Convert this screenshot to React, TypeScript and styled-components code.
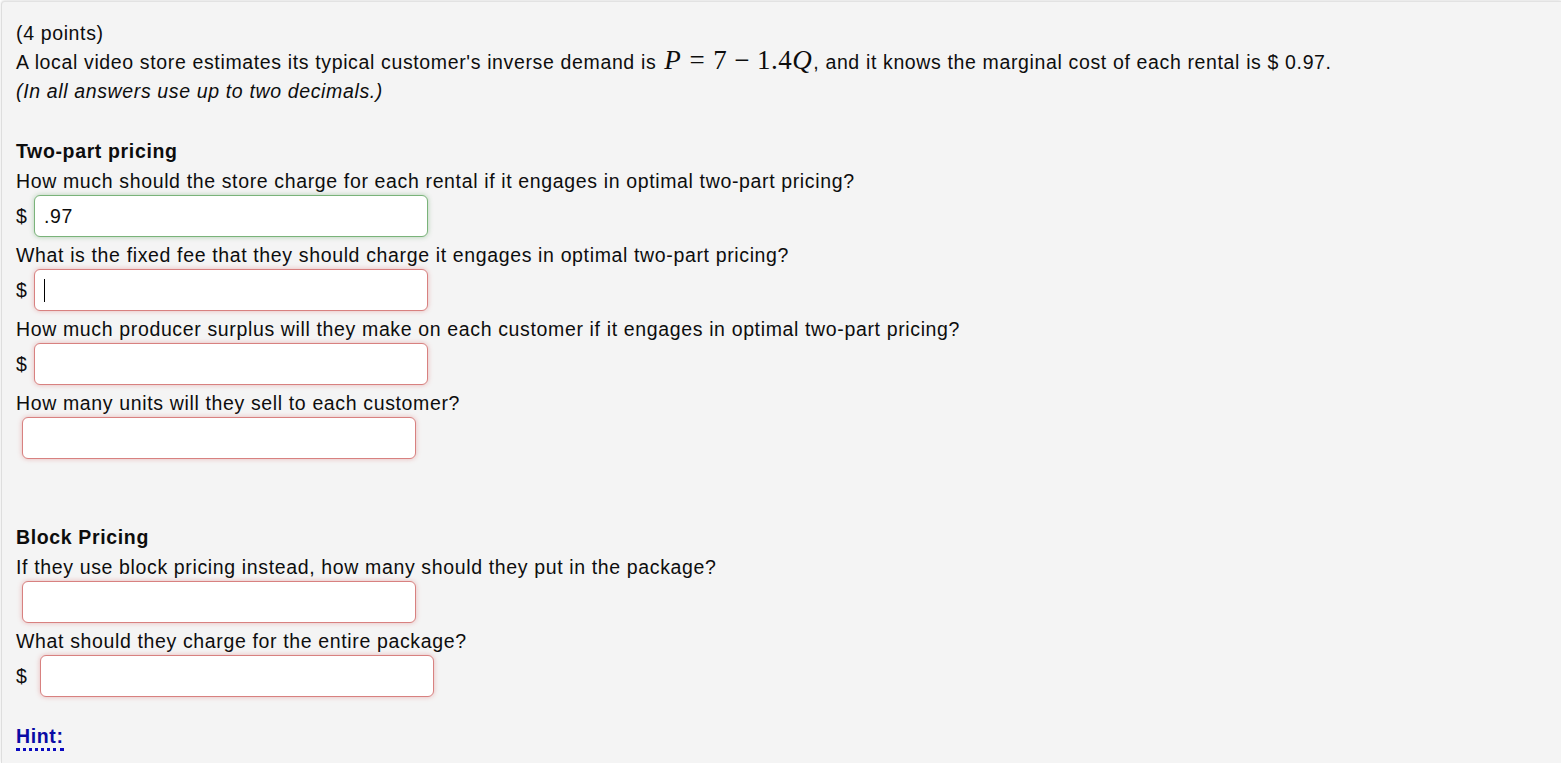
import React from "react";
import styled, { createGlobalStyle } from "styled-components";

const Global = createGlobalStyle`
  html, body { margin: 0; padding: 0; background: #ffffff; }
  body { font-family: "Liberation Sans", Arial, sans-serif; color: #0d0d0d; }
`;

const Panel = styled.div`
  margin: 1px 0 0 1px;
  min-height: 762px;
  box-sizing: border-box;
  background: #f4f4f4;
  border-left: 1px solid #dedede;
  border-top: 1px solid #e2e2e2;
  border-top-left-radius: 4px;
  box-shadow: 0 -1px 3px rgba(0, 0, 0, 0.12);
  padding: 17px 15px 0 14px;
  font-size: 19.5px;
  letter-spacing: 0.64px;
  line-height: 28px;
`;

const Line = styled.div<{ $mb?: number }>`
  height: 28px;
  line-height: 28px;
  margin-bottom: ${(p) => p.$mb ?? 0}px;
  white-space: nowrap;
`;

const Italic = styled(Line)`
  font-style: italic;
`;

const Heading = styled(Line)`
  font-weight: bold;
  margin-bottom: 2px;
`;

const Math = styled.span`
  font-family: "Liberation Serif", "DejaVu Serif", serif;
  font-size: 27px;
  line-height: 1;
  letter-spacing: 0.5px;
  margin: 0 1px 0 2px;
`;

const MathVar = styled.i`
  font-style: italic;
`;

const Op = styled.span<{ $w: number }>`
  margin: 0 ${(p) => p.$w}em;
`;

const Spacer = styled.div<{ $h: number }>`
  height: ${(p) => p.$h}px;
`;

const InputRow = styled.div`
  display: flex;
  align-items: flex-start;
  height: 46px;
`;

const Dollar = styled.span`
  width: 10px;
  line-height: 42px;
  letter-spacing: 0;
`;

const Field = styled.div<{ $ok?: boolean; $ml: number }>`
  position: relative;
  box-sizing: border-box;
  width: 394px;
  height: 42px;
  margin-left: ${(p) => p.$ml}px;
  background: #ffffff;
  border: 1px solid ${(p) => (p.$ok ? "#7ab37a" : "#d88180")};
  border-radius: 6px;
  box-shadow: 0 0 5px ${(p) => (p.$ok ? "rgba(90, 160, 90, 0.45)" : "rgba(215, 90, 90, 0.4)")};
  display: flex;
  align-items: center;
  padding-left: 9px;
`;

const Caret = styled.span`
  position: absolute;
  left: 9px;
  top: 9px;
  width: 1px;
  height: 23px;
  background: #000;
`;

const Hint = styled.span`
  display: inline-block;
  color: #0a0aa5;
  font-weight: bold;
  line-height: 24px;
  border-bottom: 3px dotted #0a0ac0;
`;

const Input = ({ ok, ml, value, caret }: { ok?: boolean; ml: number; value?: string; caret?: boolean }) => (
  <Field $ok={ok} $ml={ml}>
    {value}
    {caret && <Caret />}
  </Field>
);

export default function App() {
  return (
    <>
      <Global />
      <Panel>
        <Line>(4 points)</Line>
        <Line $mb={2}>
          A local video store estimates its typical customer's inverse demand is{" "}
          <Math>
            <MathVar>P</MathVar>
            <Op $w={0.3}>=</Op>7<Op $w={0.26}>−</Op>1.4<MathVar>Q</MathVar>
          </Math>
          , and it knows the marginal cost of each rental is $ 0.97.
        </Line>
        <Italic>(In all answers use up to two decimals.)</Italic>
        <Spacer $h={32} />
        <Heading>Two-part pricing</Heading>
        <Line>How much should the store charge for each rental if it engages in optimal two-part pricing?</Line>
        <InputRow>
          <Dollar>$</Dollar>
          <Input ok ml={8} value=".97" />
        </InputRow>
        <Line>What is the fixed fee that they should charge it engages in optimal two-part pricing?</Line>
        <InputRow>
          <Dollar>$</Dollar>
          <Input ml={8} caret />
        </InputRow>
        <Line>How much producer surplus will they make on each customer if it engages in optimal two-part pricing?</Line>
        <InputRow>
          <Dollar>$</Dollar>
          <Input ml={8} />
        </InputRow>
        <Line>How many units will they sell to each customer?</Line>
        <InputRow>
          <Input ml={6} />
        </InputRow>
        <Spacer $h={60} />
        <Heading>Block Pricing</Heading>
        <Line>If they use block pricing instead, how many should they put in the package?</Line>
        <InputRow>
          <Input ml={6} />
        </InputRow>
        <Line>What should they charge for the entire package?</Line>
        <InputRow>
          <Dollar>$</Dollar>
          <Input ml={14} />
        </InputRow>
        <Spacer $h={21} />
        <Hint>Hint:</Hint>
      </Panel>
    </>
  );
}
